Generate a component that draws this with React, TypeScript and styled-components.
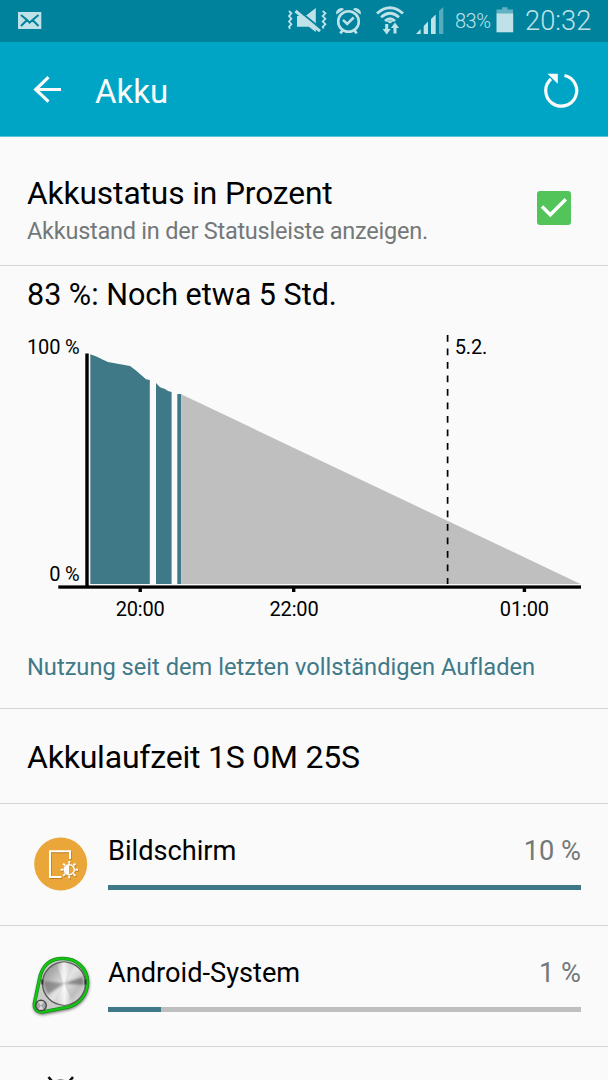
import React from 'react';
import styled, { createGlobalStyle } from 'styled-components';

const GlobalStyle = createGlobalStyle`
  * { box-sizing: border-box; }
  body {
    margin: 0;
    background: #fafafa;
    font-family: Roboto, "Liberation Sans", sans-serif;
    font-variant-ligatures: none;
    color: #000;
  }
  svg { display: block; flex: none; }
`;

const TEAL = '#3f7988';

const Screen = styled.main`
  width: 608px;
  height: 1080px;
  overflow: hidden;
  background: #fafafa;
`;

const StatusBar = styled.div`
  display: flex;
  align-items: center;
  height: 42px;
  padding: 0 15px 0 18px;
  background: #00829d;
  color: #bfe1e8;
`;

const StatusIcons = styled.div`
  display: flex;
  align-items: center;
  margin-left: auto;
`;

const StatusIcon = styled.svg<{ $gap?: number }>`
  margin-right: ${(p) => p.$gap ?? 0}px;
`;

const BatteryLevel = styled.span`
  width: 41px;
  font-size: 20px;
  font-weight: 350;
  line-height: 42px;
  letter-spacing: -0.5px;
  white-space: nowrap;
`;

const Clock = styled.span`
  width: 68px;
  font-size: 27.3px;
  font-weight: 300;
  line-height: 43px;
  white-space: nowrap;
`;

const AppBar = styled.header`
  display: flex;
  align-items: center;
  height: 95px;
  padding: 1px 28px 0 33px;
  background: #00a5c6;
  border-bottom: 1px solid #5cc4da;
  color: #fafafa;
`;

const Title = styled.h1`
  flex: 1;
  margin: 5px 0 0 33px;
  font-size: 33px;
  font-weight: 400;
  line-height: 42px;
`;

const Setting = styled.section`
  display: flex;
  align-items: center;
  height: 129px;
  padding: 0 37px 0 27px;
  border-bottom: 1px solid #d5d5d5;
`;

const SettingText = styled.div`
  flex: 1;
  padding-top: 17px;
`;

const SettingTitle = styled.div`
  font-size: 31.7px;
  line-height: 42px;
  letter-spacing: -0.1px;
`;

const SettingHint = styled.div`
  font-size: 23.5px;
  line-height: 32px;
  letter-spacing: -0.24px;
  color: #737879;
`;

const Checkbox = styled.span`
  display: flex;
  align-items: center;
  justify-content: center;
  width: 34px;
  height: 34px;
  margin-top: 13px;
  border-radius: 3px;
  background: #53c45a;
`;

const Usage = styled.section`
  height: 443px;
  border-bottom: 1px solid #d5d5d5;
`;

const Forecast = styled.h2`
  margin: 0;
  padding: 3px 27px 0;
  font-size: 30.5px;
  font-weight: 400;
  line-height: 51px;
`;

const ChartText = styled.text`
  font-size: 20px;
  letter-spacing: -0.15px;
  fill: #000;
`;

const UsageNote = styled.div`
  padding: 10px 27px 0;
  font-size: 23.65px;
  line-height: 54px;
  color: ${TEAL};
`;

const Runtime = styled.section`
  height: 95px;
  padding: 0 27px;
  border-bottom: 1px solid #d5d5d5;
  font-size: 32px;
  line-height: 97px;
  letter-spacing: -0.21px;
`;

const Consumer = styled.section<{ $height: number }>`
  display: flex;
  height: ${(p) => p.$height}px;
  padding-right: 27px;
  border-bottom: 1px solid #d5d5d5;
`;

const ConsumerIcon = styled.div`
  width: 108px;
  padding: 27px 0 0 28px;
`;

const ConsumerBody = styled.div`
  flex: 1;
  padding-top: 27px;
`;

const ConsumerLine = styled.div`
  display: flex;
  justify-content: space-between;
  margin-bottom: 14px;
  font-size: 27.2px;
  line-height: 40px;
`;

const Share = styled.span`
  color: #737879;
`;

const Track = styled.div`
  height: 5px;
  background: #bfbfbf;
`;

const Fill = styled.div`
  height: 5px;
  background: ${TEAL};
`;

function MailIcon() {
  return (
    <svg width="24" height="18" viewBox="0 0 24 18">
      <rect width="23.3" height="17" fill="currentColor" />
      <path d="M3 3 L9 8 L11.6 10.7 L14.5 8 L20.5 3 M3 14 L9 8 M20.5 14 L14.5 8" fill="none" stroke="#00829d" strokeWidth="2" />
    </svg>
  );
}

function MuteVibrateIcon() {
  return (
    <StatusIcon $gap={8} width="41" height="28" viewBox="287 7 41 28">
      <g fill="none" stroke="currentColor" strokeWidth="1.8">
        <path d="M289 11 l2.4 2.4 l-2.4 2.7 l2.4 2.7 l-2.4 2.7 l2.4 2.7 l-2.4 2.7 l1 2" />
        <path d="M322.700 11 l2.700 2.400 l-2.700 2.700 l2.700 2.700 l-2.700 2.700 l2.700 2.700 l-2.700 2.700 l1 1.500" />
      </g>
      <path d="M297 16 h8.500 l10.300 -8 v24 l-7 -5.300 h-11.800z" fill="currentColor" />
      <path d="M297 9.200 L321.500 29.300" stroke="#00829d" strokeWidth="2" />
      <path d="M295.500 11 L320 31.200" stroke="currentColor" strokeWidth="3" />
    </StatusIcon>
  );
}

function AlarmIcon() {
  return (
    <StatusIcon $gap={14} width="26" height="28" viewBox="336 6 26 28">
      <g fill="none" stroke="currentColor">
        <circle cx="348.500" cy="20.500" r="10.300" strokeWidth="2.600" />
        <path d="M343 18.800 l4.200 4.200 l6.500 -6.500" strokeWidth="2.500" />
        <path d="M342.500 29.500 l-2.200 2.800 M354.500 29.500 l2.200 2.800" strokeWidth="2.800" />
      </g>
      <path d="M336.500 13.500 q-1.500 -3 2 -5.500 q3.500 -2.200 5.500 0.200z M360.500 13.500 q1.500 -3 -2 -5.500 q-3.500 -2.200 -5.500 0.200z" fill="currentColor" />
    </StatusIcon>
  );
}

function WifiIcon() {
  return (
    <StatusIcon $gap={11} width="29" height="30" viewBox="376 6 29 30">
      <g fill="none" stroke="currentColor" strokeWidth="2.8">
        <path d="M377 13.500 Q390 2 403 13.500" />
        <path d="M381 17.300 Q390 9.300 399 17.300" />
        <path d="M385 21 Q390 16.500 395 21" />
      </g>
      <path d="M387 21.500 Q390 19.300 393 21.500 L390 23.500z" fill="currentColor" />
      <path d="M385.200 24 h3 v5 h2.600 l-4.100 5.500 l-4.100 -5.500 h2.600z" fill="currentColor" />
      <path d="M393.500 33.500 h3 v-5.500 h2.600 l-4.100 -5.500 l-4.100 5.500 h2.600z" fill="currentColor" />
    </StatusIcon>
  );
}

function SignalIcon() {
  return (
    <StatusIcon $gap={11} width="28" height="28" viewBox="416 7 28 28">
      <g fill="currentColor">
        <path d="M416 34 L420.700 29 V34z" />
        <path d="M423.700 26 L428 21.500 V34 H423.700z" />
        <path d="M431 19 L435.700 14.500 V34 H431z" />
        <path opacity="0.45" d="M439 11 L443.300 7 V34 H439z" />
      </g>
    </StatusIcon>
  );
}

function BatteryIcon() {
  return (
    <StatusIcon $gap={11} width="18" height="28" viewBox="496 7 18 28">
      <path d="M496.500 9.500 h5.500 v-2.300 h5.500 v2.300 h5.500 v4.500 h-16.500z" fill="currentColor" opacity="0.5" />
      <rect x="496.500" y="13.500" width="16.700" height="18.800" fill="currentColor" />
    </StatusIcon>
  );
}

function BackIcon() {
  return (
    <svg width="29" height="28" viewBox="33 76 29 28">
      <path d="M48.500 77.200 L35.700 89.500 L48.500 101.700 M35.500 89.500 H61" fill="none" stroke="currentColor" strokeWidth="3.200" />
    </svg>
  );
}

function RefreshIcon() {
  return (
    <svg width="37" height="37" viewBox="543.500 71.300 37 37">
      <path d="M565 75.800 A15.500 15.500 0 1 1 551.500 79.300" fill="none" stroke="currentColor" strokeWidth="3.200" />
      <path d="M548 74 H558.300 V84z" fill="currentColor" />
    </svg>
  );
}

function BatteryChart() {
  return (
    <svg width="608" height="310" viewBox="0 320 608 310">
      <g fill={TEAL}>
        <path d="M90.300 354.300 L97 356.700 L103 359.700 L108 362 L130 366 L136 370.500 L146 379.300 L149.800 380 V584 H90.300z" />
        <path d="M156 383 L160 387.300 L165 389 L168 391 L171.600 392 V584 H156z" />
        <path d="M177.300 394 H181.200 V584 H177.300z" />
      </g>
      <path d="M181.200 394.300 L580.500 584 H181.200z" fill="#bfbfbf" />
      <g fill="#000">
        <rect x="85.300" y="353.500" width="3.400" height="234" />
        <rect x="58.300" y="585.400" width="522.700" height="3.300" />
        <rect x="138.500" y="588" width="3.400" height="4" />
        <rect x="292" y="588" width="3.400" height="4" />
        <rect x="522.700" y="588" width="3.400" height="4" />
      </g>
      <path d="M447.600 335 V584" stroke="#000" strokeWidth="1.700" strokeDasharray="6.750 6.750" />
      <ChartText x="79.600" y="353.500" textAnchor="end">100 %</ChartText>
      <ChartText x="79.600" y="580.500" textAnchor="end">0 %</ChartText>
      <ChartText x="454.700" y="353.500">5.2.</ChartText>
      <ChartText x="140.200" y="616" textAnchor="middle">20:00</ChartText>
      <ChartText x="294" y="616" textAnchor="middle">22:00</ChartText>
      <ChartText x="524.400" y="616" textAnchor="middle">01:00</ChartText>
    </svg>
  );
}

function DisplayIcon() {
  const rays = [0, 45, 90, 135, 180, 225, 270, 315];
  return (
    <svg width="64" height="64" viewBox="28 831 64 64">
      <circle cx="60.700" cy="864" r="26.500" fill="#eba63a" />
      {[{ c: '#b87d25', d: 1 }, { c: '#fff', d: 0 }].map(({ c, d }) => (
        <g key={c} transform={`translate(${d * 0.7} ${d})`} fill="none" stroke={c}>
          <path d="M70 859 V851.300 H50 V877 H61.500" strokeWidth="2" />
          <circle cx="69.300" cy="869.700" r="5" strokeWidth="1.500" />
          <path d="M69.300 865 A4.700 4.700 0 0 0 69.300 874.400z" fill={c} stroke="none" />
          {rays.map((a) => (
            <path key={a} d="M69.300 863.800 V861" strokeWidth="1.900" transform={`rotate(${a} 69.300 869.700)`} />
          ))}
        </g>
      ))}
    </svg>
  );
}

function SystemIcon() {
  const outline = 'M39.500 979 C42 966 50 958.500 63 958.500 C77 958.500 87.500 969 87.500 982 C87.500 994 80 1003.500 68.500 1007 L42.500 1012 C36.500 1012.500 34 1008.500 34.300 1004z';
  return (
    <svg width="68" height="68" viewBox="28 953 68 68">
      <defs>
        <linearGradient id="metal" x1="0" y1="0.100" x2="1" y2="0.900">
          <stop offset="0" stopColor="#8c8c8c" />
          <stop offset="0.250" stopColor="#b4b4b4" />
          <stop offset="0.500" stopColor="#e4e4e4" />
          <stop offset="0.750" stopColor="#bdbdbd" />
          <stop offset="1" stopColor="#e4e4e4" />
        </linearGradient>
        <linearGradient id="sheen" x1="0" y1="0" x2="1" y2="0">
          <stop offset="0" stopColor="#fff" stopOpacity="0" />
          <stop offset="0.500" stopColor="#fff" stopOpacity="0.800" />
          <stop offset="1" stopColor="#fff" stopOpacity="0" />
        </linearGradient>
        <filter id="soft" x="-20%" y="-20%" width="140%" height="140%">
          <feGaussianBlur stdDeviation="1.600" />
        </filter>
        <filter id="brushed" x="-20%" y="-20%" width="140%" height="140%">
          <feGaussianBlur stdDeviation="1" />
        </filter>
      </defs>
      <path d={outline} fill="#333" stroke="#333" strokeWidth="3" opacity="0.650" transform="translate(0.500 1.500)" filter="url(#soft)" />
      <path d={outline} fill="#c9cbc9" stroke="#1a8a1a" strokeWidth="3.600" />
      <path d={outline} fill="none" stroke="#12c812" strokeWidth="2.200" />
      <circle cx="64" cy="983.500" r="21.500" fill="url(#metal)" stroke="#5c5c5c" strokeWidth="1.400" />
      <g filter="url(#brushed)">
        <path d="M64 983.500 L44.500 981 A20 20 0 0 0 48 994.500z" fill="#555" opacity="0.500" />
        <path d="M64 983.500 L82.500 977 A20 20 0 0 1 83.500 985z" fill="#444" opacity="0.500" />
      </g>
      <path d="M64 983.500 L56 964 A21 21 0 0 1 72 964z" fill="url(#sheen)" />
      <path d="M64 983.500 L56 1003 A21 21 0 0 0 73 1003z" fill="url(#sheen)" />
      <path d="M42.300 979.500 v5 M85.500 979.500 v5" stroke="#333" strokeWidth="2" />
      <circle cx="41" cy="1005.500" r="5.300" fill="#a5a5a5" stroke="#484848" strokeWidth="1.400" />
      <path d="M41 1005.500 L38 1001.500 H44z M41 1005.500 L38.500 1009.500 H43.500z" fill="#ddd" />
    </svg>
  );
}

function AndroidIcon() {
  return (
    <svg width="64" height="32" viewBox="28 1074 64 32">
      <path d="M48.500 1077 l5 6 M73 1077 l-5 6" stroke="#111" strokeWidth="2.600" />
      <path d="M46 1097 C46 1073.500 75 1073.500 75 1097z" fill="#111" />
    </svg>
  );
}

interface ConsumerRowProps {
  name?: string;
  share?: string;
  fill?: number;
  height: number;
  icon: React.ReactNode;
}

function ConsumerRow({ name, share, fill = 0, height, icon }: ConsumerRowProps) {
  return (
    <Consumer $height={height}>
      <ConsumerIcon>{icon}</ConsumerIcon>
      {name && (
        <ConsumerBody>
          <ConsumerLine>
            <span>{name}</span>
            <Share>{share}</Share>
          </ConsumerLine>
          <Track>
            <Fill style={{ width: `${fill}%` }} />
          </Track>
        </ConsumerBody>
      )}
    </Consumer>
  );
}

export default function App() {
  return (
    <Screen>
      <GlobalStyle />
      <StatusBar>
        <MailIcon />
        <StatusIcons>
          <MuteVibrateIcon />
          <AlarmIcon />
          <WifiIcon />
          <SignalIcon />
          <BatteryLevel>83%</BatteryLevel>
          <BatteryIcon />
          <Clock>20:32</Clock>
        </StatusIcons>
      </StatusBar>
      <AppBar>
        <BackIcon />
        <Title>Akku</Title>
        <RefreshIcon />
      </AppBar>
      <Setting>
        <SettingText>
          <SettingTitle>Akkustatus in Prozent</SettingTitle>
          <SettingHint>Akkustand in der Statusleiste anzeigen.</SettingHint>
        </SettingText>
        <Checkbox>
          <svg width="34" height="34" viewBox="0 0 34 34">
            <path d="M5 15.500 L13.300 23.800 L28.800 8.300" fill="none" stroke="#fff" strokeWidth="3.400" />
          </svg>
        </Checkbox>
      </Setting>
      <Usage>
        <Forecast>83 %: Noch etwa 5 Std.</Forecast>
        <BatteryChart />
        <UsageNote>Nutzung seit dem letzten vollständigen Aufladen</UsageNote>
      </Usage>
      <Runtime>Akkulaufzeit 1S 0M 25S</Runtime>
      <ConsumerRow name="Bildschirm" share="10 %" fill={100} height={122} icon={<DisplayIcon />} />
      <ConsumerRow name="Android-System" share="1 %" fill={11.1} height={121} icon={<SystemIcon />} />
      <ConsumerRow height={121} icon={<AndroidIcon />} />
    </Screen>
  );
}
